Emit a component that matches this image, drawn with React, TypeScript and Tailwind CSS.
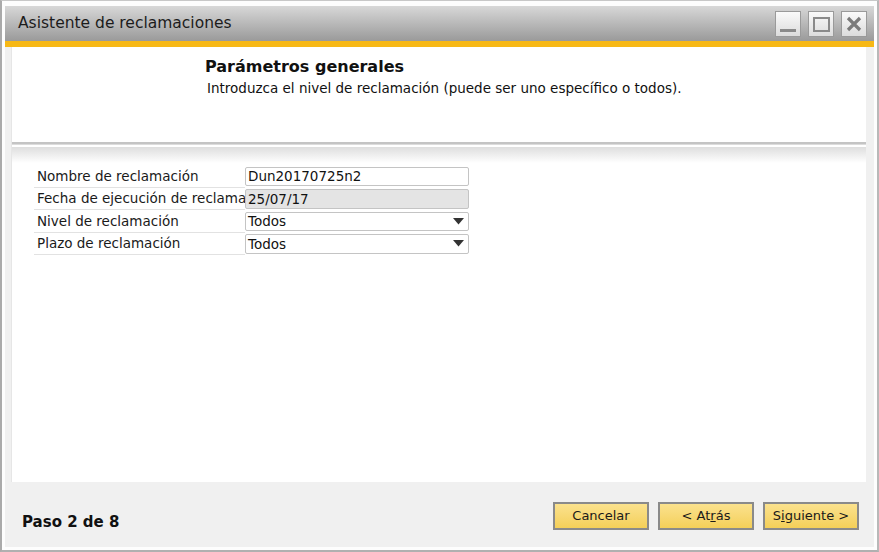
import React from "react";

const font = { fontFamily: '"DejaVu Sans", Verdana, sans-serif' };

function WinButton({ kind }: { kind: "min" | "max" | "close" }) {
  return (
    <div className="w-[26px] h-[26px] border border-[#9a9a9a] bg-gradient-to-b from-[#fafafa] to-[#dcdcdc] flex items-center justify-center">
      {kind === "min" && <div className="w-[16px] h-[3px] bg-[#8a8a8a] mt-[12px]" />}
      {kind === "max" && <div className="w-[17px] h-[15px] border-2 border-[#8a8a8a]" />}
      {kind === "close" && (
        <svg width="16" height="16" viewBox="0 0 16 16">
          <path d="M2 2 L14 14 M14 2 L2 14" stroke="#7a7a7a" strokeWidth="3.2" />
        </svg>
      )}
    </div>
  );
}

function Row({ label, children }: { label: string; children: React.ReactNode }) {
  return (
    <div className="flex items-center h-[22.5px]">
      <div className="w-[211px] h-full flex items-center pl-[3px] border-b border-[#e2e2e2] text-[13.5px] text-[#1a1a1a] whitespace-nowrap overflow-hidden">
        {label}
      </div>
      {children}
    </div>
  );
}

function Field({ value, grey, select }: { value: string; grey?: boolean; select?: boolean }) {
  return (
    <div
      className={`w-[224px] h-[19.5px] border border-[#c4c4c4] rounded-[2px] flex items-center justify-between pl-[2px] pr-[4px] text-[13.5px] text-[#111] ${grey ? "bg-[#e4e4e4]" : "bg-white"}`}
    >
      <span>{value}</span>
      {select && (
        <svg width="11" height="7" viewBox="0 0 11 7">
          <path d="M0 0 H11 L5.5 6.5 Z" fill="#333" />
        </svg>
      )}
    </div>
  );
}

function Btn({ children }: { children: React.ReactNode }) {
  return (
    <button className="w-[96px] h-[28px] border-2 border-[#8a8a8a] bg-gradient-to-b from-[#fbe28d] to-[#f4cf58] text-[13px] text-[#1a1a1a] flex items-center justify-center">
      {children}
    </button>
  );
}

export default function App() {
  return (
    <div style={font} className="w-[879px] h-[552px] bg-[#fdfdfd] border-l-2 border-r-2 border-b-2 border-t border-l-[#aaaaaa] border-r-[#b8b8b8] border-b-[#b0b0b0] border-t-[#c8c8c8] p-[3px] pt-[5px] flex flex-col overflow-hidden">
      <div className="h-[35px] bg-gradient-to-b from-[#d8d8d8] to-[#9a9a9a] flex items-center justify-between pl-[13px] pr-[7px]">
        <span className="text-[15.5px] text-[#1c1c1c]">Asistente de reclamaciones</span>
        <div className="flex gap-[7px] mt-[1px]">
          <WinButton kind="min" />
          <WinButton kind="max" />
          <WinButton kind="close" />
        </div>
      </div>
      <div className="h-[6px] bg-[#f7b815]" />
      <div className="flex-1 bg-[#f0f0f0] flex flex-col pl-[6px] pr-[8px] pb-[3px]">
        <div className="flex-1 bg-white border-l border-[#e6e6e6] flex flex-col">
          <div className="h-[95px] flex flex-col pl-[193px] pt-[10px]">
            <div className="text-[16px] font-bold text-[#111] leading-[20px]">Parámetros generales</div>
            <div className="text-[13.5px] text-[#111] pl-[2px] leading-[20px] mt-[1px]">
              Introduzca el nivel de reclamación (puede ser uno específico o todos).
            </div>
          </div>
          <div className="h-[2px] bg-[#c4c4c4]" />
          <div className="h-[1px] bg-[#dcdcdc]" />
          <div className="h-[2px] bg-white" />
          <div className="h-[16px] bg-gradient-to-b from-[#dedede] to-white" />
          <div className="pl-[22px] pt-[2px] flex flex-col">
            <Row label="Nombre de reclamación">
              <Field value="Dun20170725n2" />
            </Row>
            <Row label="Fecha de ejecución de reclama">
              <Field value="25/07/17" grey />
            </Row>
            <Row label="Nivel de reclamación">
              <Field value="Todos" select />
            </Row>
            <Row label="Plazo de reclamación">
              <Field value="Todos" select />
            </Row>
          </div>
        </div>
        <div className="h-[62px] flex items-center justify-between pl-[11px] pr-[7px] pt-[6px]">
          <span className="text-[15px] font-bold text-[#111] mt-[13px]">Paso 2 de 8</span>
          <div className="flex gap-[9px]">
            <Btn>Cancelar</Btn>
            <Btn>
              &lt; At<span className="underline">r</span>ás
            </Btn>
            <Btn>
              S<span className="underline">i</span>guiente &gt;
            </Btn>
          </div>
        </div>
      </div>
    </div>
  );
}
